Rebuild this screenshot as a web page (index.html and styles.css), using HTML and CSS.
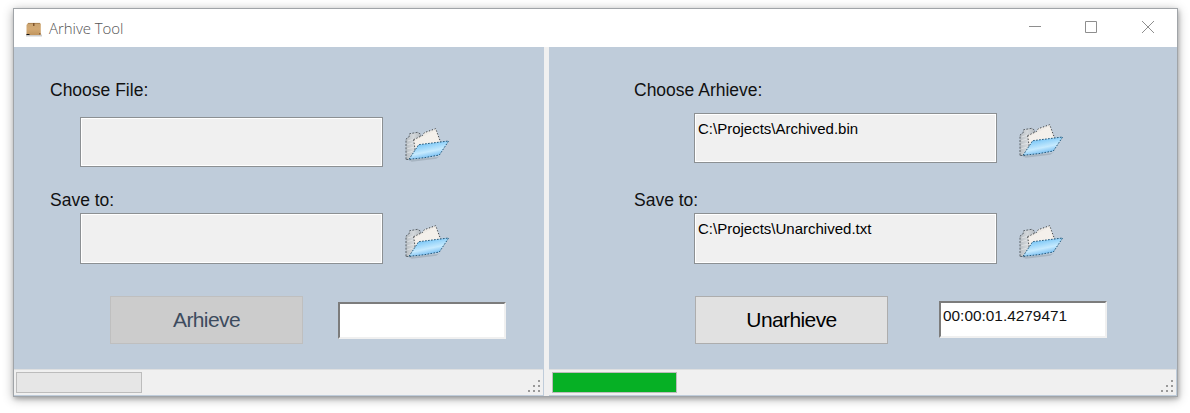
FILE: index.html
```html
<!DOCTYPE html>
<html lang="en">
<head>
<meta charset="utf-8">
<title>Arhive Tool</title>
<link rel="stylesheet" href="styles.css">
</head>
<body>
<svg class="defs" width="0" height="0" aria-hidden="true">
  <defs>
    <linearGradient id="front" x1="0.3" y1="0" x2="0.75" y2="1"><stop offset="0" stop-color="#5fb4ee"/><stop offset=".25" stop-color="#8ed0f9"/><stop offset=".55" stop-color="#c6eafe"/><stop offset=".8" stop-color="#7fc3f4"/><stop offset="1" stop-color="#2f86dc"/></linearGradient>
    <linearGradient id="back" x2="1"><stop offset="0" stop-color="#b9bfc4"/><stop offset=".5" stop-color="#d4d8db"/><stop offset="1" stop-color="#b4babf"/></linearGradient>
    <linearGradient id="kraft" x2="0" y2="1"><stop offset="0" stop-color="#c9a36f"/><stop offset=".5" stop-color="#d3a973"/><stop offset="1" stop-color="#c1955e"/></linearGradient>
    <symbol id="folder" viewBox="27 36 138 108">
      <path d="M42 135L128 126L136 122L124 131L50 140Z" fill="#8f9da9" opacity=".5"/>
      <path d="M33 133V72L42 66L44 56L68 52L76 57L78 120L44 134Z" fill="url(#back)" stroke="#5c646b" stroke-width="3" stroke-dasharray="6 4"/>
      <path d="M38 78L54 73M37 89L54 84M37 101L56 97M37 113L52 109" stroke="#e8eaec" stroke-width="2"/>
      <path d="M56 74L83 61L88 53L122 41L137 82L76 107L61 111Z" fill="#eeeae5" stroke="#45494c" stroke-width="3" stroke-dasharray="4 5"/>
      <path d="M59 78L121 46L133 84L66 108Z" fill="#f4f0eb"/>
      <path d="M42 133L71 89L161 78L133 120L89 128Z" fill="url(#front)" stroke="#265b7d" stroke-width="3" stroke-dasharray="5 4"/>
    </symbol>
    <path id="dots" d="M11 1h2v2h-2zM6 6h2v2h-2zM11 6h2v2h-2zM1 11h2v2h-2zM6 11h2v2h-2zM11 11h2v2h-2z"/>
  </defs>
</svg>
<main class="window">
  <header class="titlebar">
    <svg class="app-icon" width="18" height="16" viewBox="0 0 18 16">
      <path d="M1 12.500H17V14.500H1Z" fill="#ccc"/>
      <path d="M3 1H15L15.800 2V13H1.500V3Z" fill="url(#kraft)"/>
      <path d="M3 1.400H15" stroke="#a37c4b" stroke-width=".8"/>
      <path d="M8 1H9.500V4H8Z" fill="#80552c"/>
      <path d="M1.500 12H4.500V13H1.500Z" fill="#111"/><path d="M14 11H15.500V12.500H14Z" fill="#906840"/>
    </svg>
    <span class="title">Arhive Tool</span>
    <svg class="controls" width="125" height="14" viewBox="0 0 125 14" fill="none" stroke="#8e8e8e">
      <path d="M0 6.500H12M56.500 1.500H67.500V12.500H56.500ZM113 1L125 13M125 1L113 13"/>
    </svg>
  </header>
  <div class="split">
    <section class="pane pane-archive">
      <div class="form">
        <div class="label">Choose File:</div>
        <div class="row row-source"><div class="path"></div><svg class="folder"><use href="#folder"/></svg></div>
        <div class="label label-save">Save to:</div>
        <div class="row row-target"><div class="path"></div><svg class="folder"><use href="#folder"/></svg></div>
        <div class="actions"><button class="button" disabled>Arhieve</button><div class="time"></div></div>
      </div>
      <footer class="status"><div class="progress"></div><svg class="grip" width="14" height="14"><use href="#dots"/></svg></footer>
    </section>
    <section class="pane pane-unarchive">
      <div class="form">
        <div class="label">Choose Arhieve:</div>
        <div class="row row-source"><div class="path">C:\Projects\Archived.bin</div><svg class="folder"><use href="#folder"/></svg></div>
        <div class="label label-save">Save to:</div>
        <div class="row row-target"><div class="path">C:\Projects\Unarchived.txt</div><svg class="folder"><use href="#folder"/></svg></div>
        <div class="actions"><button class="button">Unarhieve</button><div class="time">00:00:01.4279471</div></div>
      </div>
      <footer class="status"><div class="progress progress-full"></div><svg class="grip" width="14" height="14"><use href="#dots"/></svg></footer>
    </section>
  </div>
</main>
</body>
</html>
```
FILE: styles.css
```css
* { box-sizing: border-box; }
body { margin: 0; height: 413px; overflow: hidden; padding: 8px 12px 16px 13px; background: #fff; font-family: "Liberation Sans", Arial, sans-serif; color: #111; }
.defs { position: absolute; }
.window { width: 1165px; height: 389px; border: 1px solid #a0a4a8; box-shadow: 0 2px 10px rgba(0,0,0,.3), 1px 2px 4px rgba(0,0,0,.2); background: #fff; }
.titlebar { height: 38px; display: flex; align-items: center; padding: 0 23px 0 11px; }
.app-icon { margin: 4px 6px 0 0; }
.title { font: 15px/20px "Open Sans", sans-serif; font-weight: 300; color: #555; letter-spacing: -.05px; margin-top: -1px; }
.controls { margin-left: auto; margin-top: -2px; }
.split { display: grid; grid-template-columns: 530px 628px; column-gap: 5px; height: 349px; background: #f0f0f0; }
.pane { display: flex; flex-direction: column; background: #bfccda; min-width: 0; }
.form { height: 322px; padding: 33px 0 0 36px; }
.pane-unarchive .form { padding-left: 85px; }
.label { height: 20px; font-size: 17.5px; line-height: 21px; letter-spacing: 0; white-space: nowrap; }
.row { display: flex; height: 50px; padding-left: 30px; }
.pane-unarchive .row { padding-left: 60px; }
.row-source { margin-top: 17px; }
.pane-unarchive .row-source { margin-top: 13px; }
.label-save { margin-top: 23px; }
.pane-unarchive .label-save { margin-top: 27px; }
.row-target { margin-top: 3px; height: 51px; }
.path { width: 303px; border: 1px solid #8c9093; box-shadow: inset 0 0 0 1px #fff; background: #f0f0f0; padding: 5px 3px; font-size: 15px; line-height: 20px; white-space: nowrap; color: #000; }
.folder { width: 46px; height: 36px; margin: 10px 0 0 21px; }
.row-target .folder { margin-top: 11px; }
.actions { display: flex; margin-top: 32px; padding-left: 60px; }
.pane-unarchive .actions { padding-left: 61px; }
.button { width: 193px; height: 48px; border: 1px solid #adadad; background: #e1e1e1; padding: 0; font: 21px/24px "Liberation Sans", Arial, sans-serif; letter-spacing: -.6px; color: #000; }
.button:disabled { border-color: #bfbfbf; background: #ccc; color: #3d4b5e; }
.time { width: 168px; height: 37px; margin: 6px 0 0 35px; background: #fff; border: 2px solid; border-color: #7c7c7c #f0f0f0 #f0f0f0 #7c7c7c; padding: 3px 2px; font-size: 15.4px; line-height: 20px; white-space: nowrap; }
.pane-unarchive .time { margin: 5px 0 0 51px; }
.status { height: 26px; display: flex; justify-content: space-between; background: #f0f0f0; border-top: 1px solid #dedfe0; margin-right: 1px; padding: 2px 2px 0 2px; }
.progress { width: 126px; height: 21px; border: 1px solid #bcbcbc; background: #e6e6e6; }
.pane-unarchive .progress { margin-left: 1px; width: 125px; }
.progress-full { background: #06b025; }
.grip { margin-top: 7px; fill: #999; }
```
